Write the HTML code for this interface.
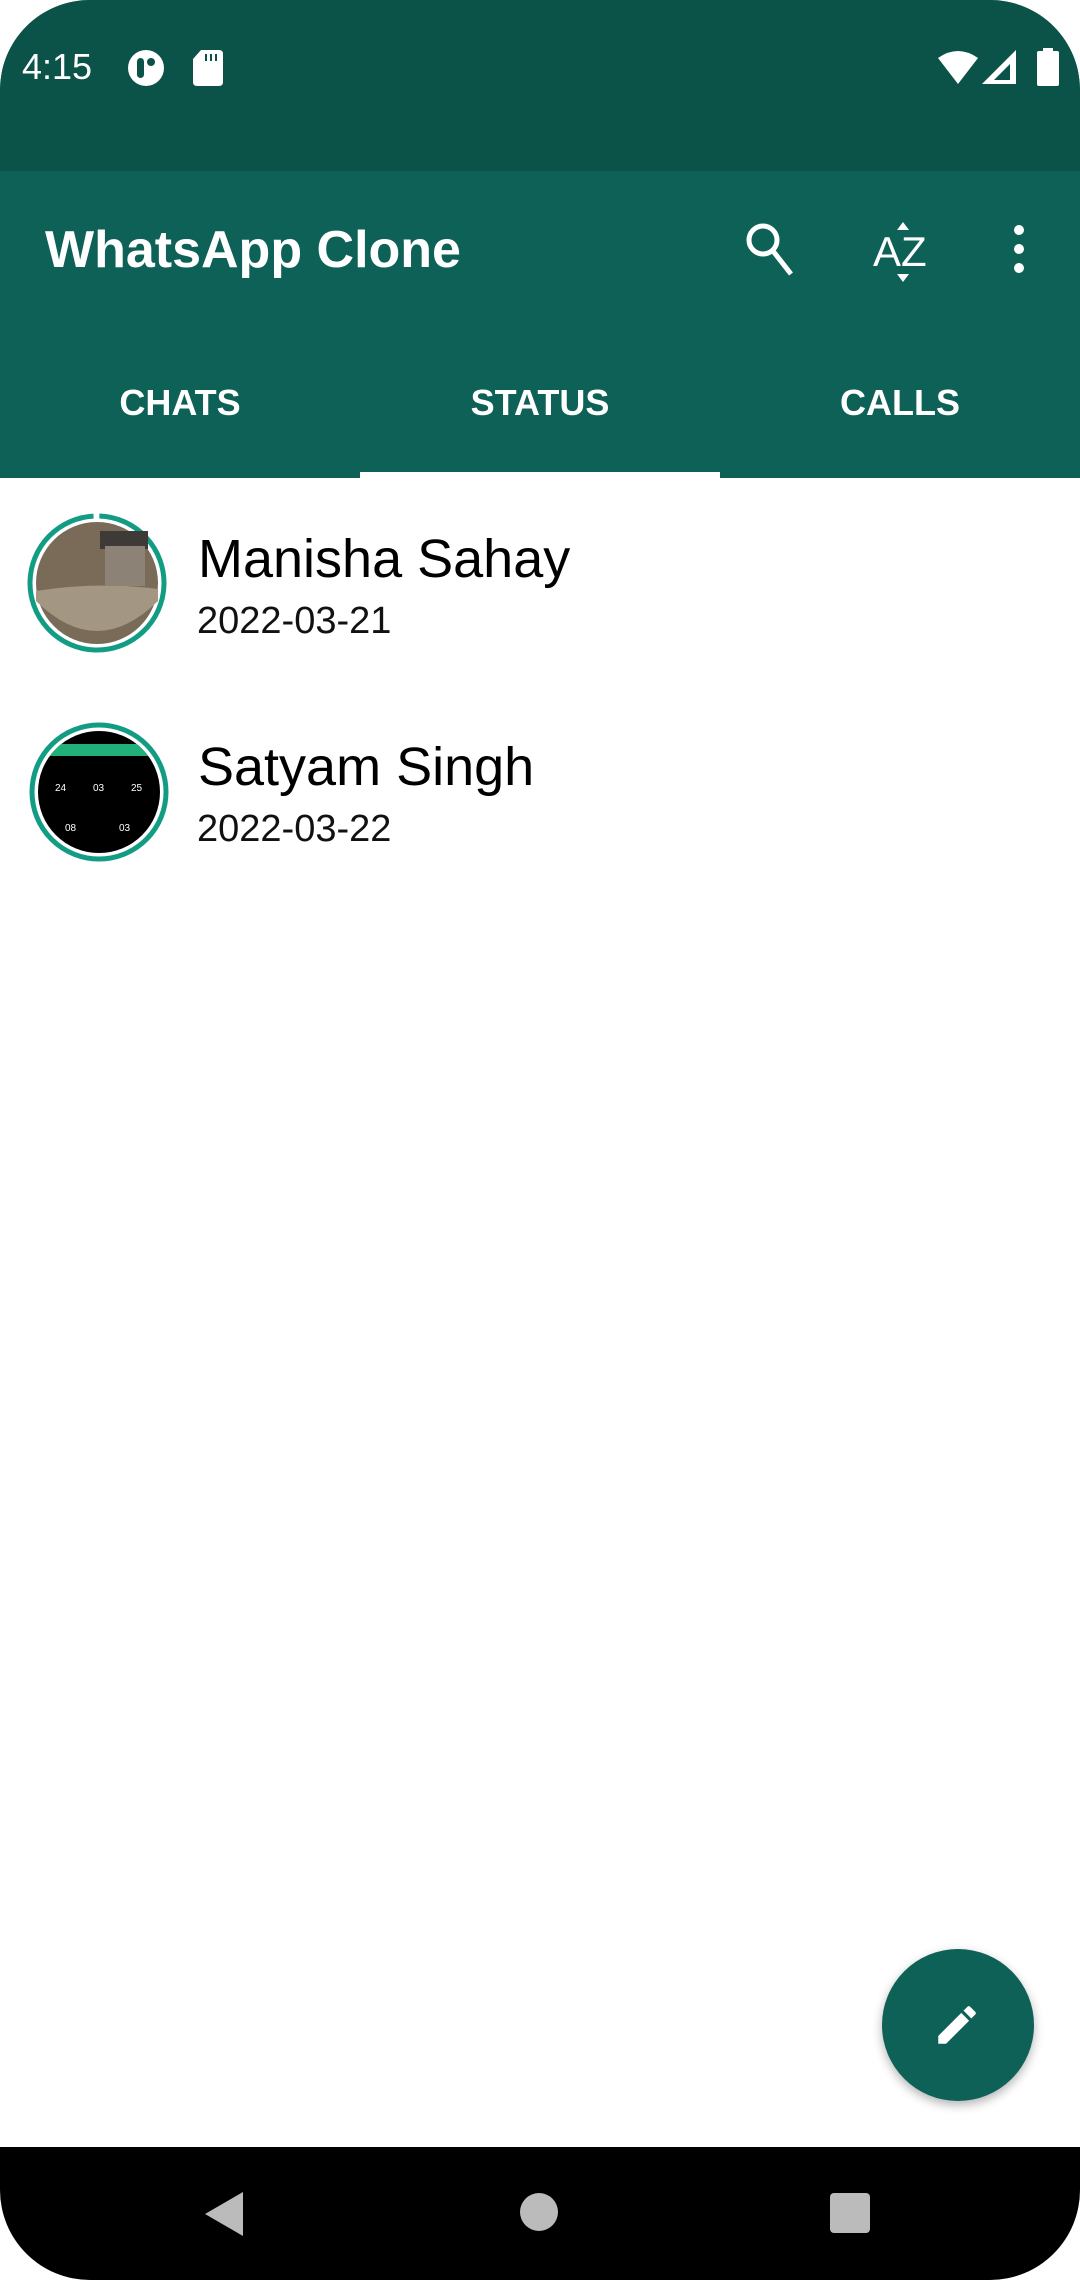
<!DOCTYPE html>
<html><head><meta charset="utf-8"><style>
html,body{margin:0;padding:0;background:#fff;}
body{width:1080px;height:2280px;position:relative;overflow:hidden;font-family:"Liberation Sans",sans-serif;}
.top{position:absolute;left:0;top:0;width:1080px;height:478px;background:#0D6157;border-radius:90px 90px 0 0;overflow:hidden;}
.sb{position:absolute;left:0;top:0;width:1080px;height:171px;background:#0B5249;}
.t{position:absolute;color:#fff;}
.tab{position:absolute;top:378px;color:#fff;font-size:36px;font-weight:bold;width:360px;text-align:center;}
.name{position:absolute;left:198px;font-size:54px;color:#000;}
.date{position:absolute;left:197px;font-size:38px;color:#111;}
.nav{position:absolute;left:0;top:2147px;width:1080px;height:133px;background:#000;border-radius:0 0 90px 90px;}
</style></head><body>
<div class="top">
 <div class="sb"></div>
 <div class="t" style="left:22px;top:46px;font-size:36px;">4:15</div>
 <svg style="position:absolute;left:126px;top:48px" width="40" height="40" viewBox="0 0 40 40"><circle cx="20" cy="20" r="18" fill="#fff"/><rect x="11" y="10" width="7" height="20" rx="3.5" fill="#0B5249"/><circle cx="25" cy="14" r="4" fill="#0B5249"/></svg>
 <svg style="position:absolute;left:193px;top:50px" width="30" height="36" viewBox="0 0 30 36"><path d="M8 0H26Q30 0 30 4V32Q30 36 26 36H4Q0 36 0 32V9Z" fill="#fff"/><rect x="12" y="4" width="2" height="7" fill="#0B5249"/><rect x="17" y="4" width="2" height="7" fill="#0B5249"/><rect x="22" y="4" width="2" height="7" fill="#0B5249"/></svg>
 <svg style="position:absolute;left:938px;top:50px" width="40" height="34" viewBox="0 0 40 34"><path d="M20 34L0 8Q20 -6 40 8Z" fill="#fff"/></svg>
 <svg style="position:absolute;left:982px;top:50px" width="34" height="34" viewBox="0 0 34 34"><path d="M34 0V34H0Z" fill="#fff"/><path d="M28 14V30H12Z" fill="#0B5249"/></svg>
 <svg style="position:absolute;left:1037px;top:48px" width="22" height="38" viewBox="0 0 22 38"><rect x="6" y="0" width="10" height="4" fill="#fff"/><rect x="0" y="3" width="22" height="35" rx="2" fill="#fff"/></svg>
 <div class="t" style="left:45px;top:220px;font-size:52px;font-weight:bold;">WhatsApp Clone</div>
 <svg style="position:absolute;left:745px;top:222px" width="50" height="54" viewBox="0 0 50 54"><circle cx="18" cy="18" r="14" fill="none" stroke="#fff" stroke-width="5"/><path d="M28 29L46 52" stroke="#fff" stroke-width="5"/></svg>
 <div class="t" style="left:873px;top:228px;font-size:42px;">AZ</div>
 <svg style="position:absolute;left:895px;top:222px" width="16" height="60" viewBox="0 0 16 60"><path d="M8 0L14 8H2Z M8 60L14 52H2Z" fill="#fff"/></svg>
 <svg style="position:absolute;left:1009px;top:224px" width="20" height="50" viewBox="0 0 20 50"><circle cx="10" cy="6" r="5" fill="#fff"/><circle cx="10" cy="25" r="5" fill="#fff"/><circle cx="10" cy="44" r="5" fill="#fff"/></svg>
 <div class="tab" style="left:0;top:382px">CHATS</div>
 <div class="tab" style="left:360px;top:382px">STATUS</div>
 <div class="tab" style="left:720px;top:382px">CALLS</div>
 <div style="position:absolute;left:360px;top:472px;width:360px;height:6px;background:#fff"></div>
</div>
<svg style="position:absolute;left:25px;top:511px" width="144" height="144" viewBox="0 0 144 144"><circle cx="72" cy="72" r="67" fill="none" stroke="#139C84" stroke-width="5" stroke-dasharray="415 6" transform="rotate(-88 72 72)"/><circle cx="72" cy="72" r="61" fill="#7a6a58"/><path d="M11 80Q72 70 133 78V90Q72 150 11 90Z" fill="#a39683"/><rect x="75" y="20" width="48" height="18" fill="#3d3a38"/><rect x="80" y="35" width="40" height="40" fill="#8c8275"/></svg>
<div class="name" style="top:528px">Manisha Sahay</div>
<div class="date" style="top:600px">2022-03-21</div>
<svg style="position:absolute;left:27px;top:720px" width="144" height="144" viewBox="0 0 144 144"><defs><clipPath id="c"><circle cx="72" cy="72" r="61"/></clipPath></defs><circle cx="72" cy="72" r="67" fill="none" stroke="#139C84" stroke-width="5"/><circle cx="72" cy="72" r="61" fill="#000"/><rect x="0" y="24" width="144" height="12" fill="#22b07a" clip-path="url(#c)"/><text x="28" y="71" fill="#fff" font-size="10" font-family="Liberation Sans">24</text><text x="66" y="71" fill="#fff" font-size="10" font-family="Liberation Sans">03</text><text x="104" y="71" fill="#fff" font-size="10" font-family="Liberation Sans">25</text><text x="38" y="111" fill="#fff" font-size="10" font-family="Liberation Sans">08</text><text x="92" y="111" fill="#fff" font-size="10" font-family="Liberation Sans">03</text></svg>
<div class="name" style="top:736px">Satyam Singh</div>
<div class="date" style="top:808px">2022-03-22</div>
<div style="position:absolute;left:882px;top:1949px;width:152px;height:152px;border-radius:50%;background:#0D6157;box-shadow:0 4px 10px rgba(0,0,0,.3)"></div>
<svg style="position:absolute;left:932px;top:2000px" width="50" height="50" viewBox="0 0 24 24"><path d="M3 17.25V21h3.75L17.81 9.94l-3.75-3.75L3 17.25zM20.71 7.04a1 1 0 000-1.41l-2.34-2.34a1 1 0 00-1.41 0l-1.830 1.83 3.75 3.75 1.83-1.83z" fill="#fff"/></svg>
<div class="nav">
 <svg style="position:absolute;left:205px;top:45px" width="40" height="44" viewBox="0 0 40 44"><path d="M38 0V44L0 22Z" fill="#bbb"/></svg>
 <div style="position:absolute;left:520px;top:46px;width:38px;height:38px;border-radius:50%;background:#bbb"></div>
 <div style="position:absolute;left:830px;top:46px;width:40px;height:40px;border-radius:4px;background:#bbb"></div>
</div>
</body></html>
